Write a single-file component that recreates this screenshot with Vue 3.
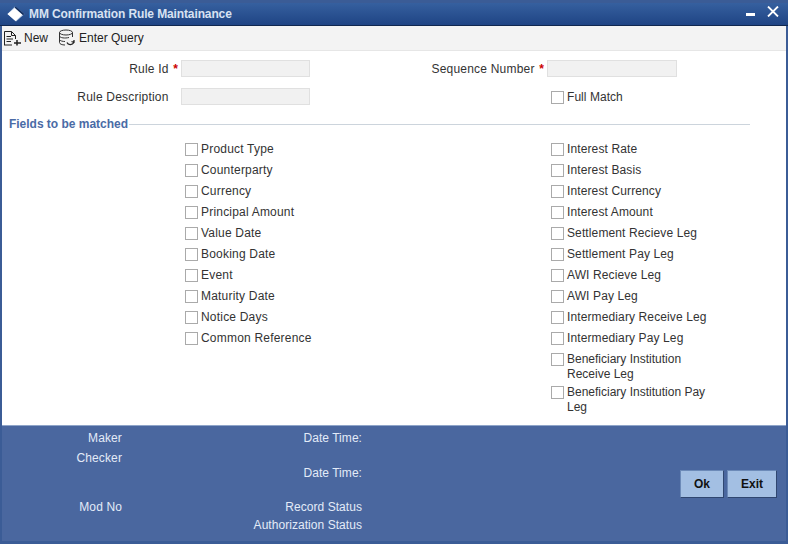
<script setup>
const left = ['Product Type','Counterparty','Currency','Principal Amount','Value Date','Booking Date','Event','Maturity Date','Notice Days','Common Reference']
const right = ['Interest Rate','Interest Basis','Interest Currency','Interest Amount','Settlement Recieve Leg','Settlement Pay Leg','AWI Recieve Leg','AWI Pay Leg','Intermediary Receive Leg','Intermediary Pay Leg']
const tall = ['Beneficiary Institution Receive Leg','Beneficiary Institution Pay Leg']
</script>

<template>
  <div class="window">
    <header class="titlebar">
      <svg class="logo" width="18" height="16" viewBox="0 0 18 16"><path d="M8 0.500 17.500 8 9 15.500 .5 8Z" fill="#bcd0ea"/><path d="M8 2 15.500 8.500 8.500 15 .5 8Z" fill="#fff"/><path d="M8.500 .5 17.500 8 16 9.200 7.500 1.500Z" fill="#0f2c5e"/></svg>
      <span class="title">MM Confirmation Rule Maintainance</span>
      <span class="winbtns">
        <svg class="min" width="9" height="3" viewBox="0 0 9 3"><rect width="9" height="3" fill="#fff"/></svg>
        <svg class="close" width="12" height="11" viewBox="0 0 12 11"><path d="M1 .5 11 10.500M11 .5 1 10.500" stroke="#fff" stroke-width="1.800" fill="none"/></svg>
      </span>
    </header>
    <nav class="toolbar">
      <span class="tool">
        <svg width="19" height="16" viewBox="0 0 19 16" fill="none" stroke="#222" stroke-width="1"><path d="M1.500 15V1.500H8.500L12.500 5.500V9"/><path d="M8.500 1.500V5.500H12.500"/><path d="M3.500 6.500H8M3.500 9H10M3.500 11.500H8M1 15H9"/><path d="M14 10V15.500M11 13H18" stroke-width="1.500"/></svg>
        New
      </span>
      <span class="tool">
        <svg width="18" height="18" viewBox="1 0 18 18" fill="none" stroke="#333" stroke-width="1"><ellipse cx="8" cy="3.500" rx="6.500" ry="2.500"/><path d="M1.500 3.500V13.500C1.500 15 4 16 7 16M14.500 3.500V8M1.500 7C2 9 7 9.500 11 8.500M1.500 10.500C2 12 5 12.500 7 12.500"/><path d="M9 13.500C10 16 14 16.500 16 13.500V11M16 13.500 13.500 12.500" stroke="#222" stroke-width="1.300"/></svg>
        Enter Query
      </span>
    </nav>
    <main class="form">
      <div class="form-row">
        <label class="lbl first">Rule Id <em>*</em></label>
        <input class="txt" />
        <label class="lbl second">Sequence Number <em>*</em></label>
        <input class="txt seq" />
      </div>
      <div class="form-row row-desc">
        <label class="lbl first">Rule Description <em class="hidden">*</em></label>
        <input class="txt" />
        <label class="check full"><i class="box"></i>Full Match</label>
      </div>
      <div class="legend"><span>Fields to be matched</span></div>
      <div class="lists">
        <div class="list list-left">
          <label v-for="t in left" :key="t" class="check"><i class="box"></i>{{ t }}</label>
        </div>
        <div class="list list-right">
          <label v-for="t in right" :key="t" class="check"><i class="box"></i>{{ t }}</label>
          <label v-for="t in tall" :key="t" class="check tall"><i class="box"></i><span>{{ t }}</span></label>
        </div>
      </div>
    </main>
    <footer class="footer">
      <div class="col col-a">
        <span>Maker</span>
        <span class="checker">Checker</span>
        <span class="mod">Mod No</span>
      </div>
      <div class="col col-b">
        <span>Date Time:</span>
        <span class="dt2">Date Time:</span>
        <span class="rec">Record Status</span>
        <span class="auth">Authorization Status</span>
      </div>
      <div class="actions">
        <button class="btn ok">Ok</button>
        <button class="btn exit">Exit</button>
      </div>
    </footer>
  </div>
</template>

<style>
html, body { margin: 0; padding: 0; background: #3a5a92; }
</style>

<style scoped>
.window {
  width: 788px; height: 544px; box-sizing: border-box;
  display: flex; flex-direction: column;
  border-left: 2px solid #3b5c96; border-right: 2px solid #3b5c96; border-bottom: 3px solid #3b5c96;
  background: #fff;
  font: 12px/15px "Liberation Sans", Arial, sans-serif; color: #333; letter-spacing: .12px;
}
.titlebar {
  height: 26px; box-sizing: border-box; flex: none; margin: 0 -2px;
  padding: 1px 9px 0 7px; display: flex; align-items: center;
  background: linear-gradient(#36609f, #1f4484);
  border-top: 3px solid #3b5c96; border-bottom: 1px solid #10274f;
}
.logo { flex: none; margin-top: -1px; }
.title { margin-left: 4px; font-weight: 700; color: #d8e2f2; font-size: 12px; letter-spacing: -.12px; }
.winbtns { margin-left: auto; display: flex; align-items: flex-start; gap: 12px; margin-top: -6px; }
.min { margin-top: 7px; }
.toolbar {
  height: 25px; flex: none; box-sizing: border-box; display: flex; align-items: center; gap: 11px;
  padding: 0 0 0 1px; background: #f3f3f3; border-bottom: 1px solid #e6e6e6; color: #222; letter-spacing: 0;
}
.tool { display: flex; align-items: center; gap: 2px; }
.form { flex: 1; min-height: 0; }
.form-row { display: flex; align-items: center; height: 18px; margin-top: 9px; letter-spacing: .2px; }
.row-desc { margin-top: 10px; }
.lbl { text-align: right; flex: none; white-space: nowrap; }
.lbl em { color: #c00; font-style: normal; font-weight: 700; margin-left: 1px; }
.hidden { visibility: hidden; }
.first { width: 176px; margin-right: 3px; }
.second { width: 234px; margin-right: 3px; }
.txt {
  width: 129px; height: 17px; box-sizing: border-box; flex: none; margin: 0 0 1px;
  background: #f1f1f1; border: 1px solid #e0e0e0; padding: 0;
}
.seq { width: 130px; }
.legend {
  display: flex; align-items: center; gap: 1px; margin: 11px 36px 0 7px;
  font-weight: 700; color: #4a6ba6; letter-spacing: -.02px;
}
.legend::after { content: ""; flex: 1; height: 1px; background: #ccd4dc; }
.lists { display: flex; padding: 7px 0 0 183px; }
.list { width: 366px; display: flex; flex-direction: column; flex: none; }
.list-left { letter-spacing: .2px; }
.list-right { width: 160px; }
.check { display: flex; align-items: flex-start; padding: 3px 0; }
.tall { padding-bottom: 0; letter-spacing: 0; }
.box {
  width: 11px; height: 11px; border: 1px solid #aaa; background: #fff;
  flex: none; margin: 1px 3px 0 0; display: block;
}
.full { padding: 0; margin-left: 241px; letter-spacing: .05px; }
.footer {
  height: 116px; flex: none; box-sizing: border-box; display: flex; position: relative;
  background: #4a679f; border-top: 1px solid #8fa5c9; color: #e3ebf8; padding-top: 5px;
}
.col { display: flex; flex-direction: column; align-items: flex-end; }
.col-a { width: 120px; }
.col-b { width: 240px; letter-spacing: .05px; }
.checker { margin-top: 5px; }
.mod { margin-top: 34px; }
.dt2 { margin-top: 20px; }
.rec { margin-top: 19px; }
.auth { margin-top: 3px; }
.actions { margin-left: auto; margin-right: 9px; margin-top: 39px; display: flex; gap: 3px; align-items: flex-start; }
.btn {
  height: 28px; box-sizing: border-box; padding: 0; margin: 0;
  background: #a3bfe3; color: #111; font: 700 12px "Liberation Sans", Arial, sans-serif;
  border: 1px solid; border-color: #6c8ab8 #2f4670 #2f4670 #6c8ab8;
}
.ok { width: 44px; }
.exit { width: 50px; }
</style>
